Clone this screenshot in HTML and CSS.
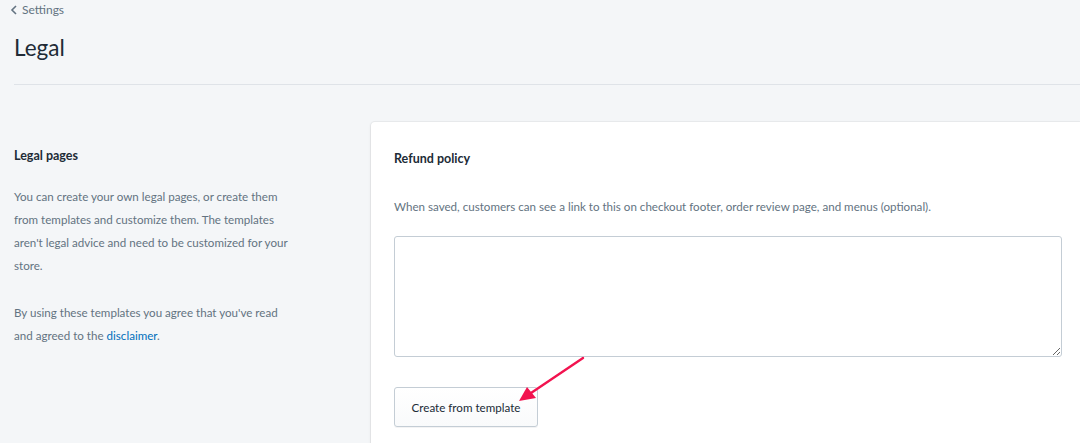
FILE: index.html
```html
<!DOCTYPE html>
<html>
<head>
<meta charset="utf-8">
<link rel="stylesheet" href="styles.css">
</head>
<body>
<div class="page">
  <header class="header">
    <a class="breadcrumb" href="#">
      <svg class="chev" width="8" height="10" viewBox="0 0 8 10"><path d="M6 1 L2 5 L6 9" fill="none" stroke="#637381" stroke-width="1.6"/></svg>
      <span>Settings</span>
    </a>
    <h1 class="title">Legal</h1>
  </header>
  <div class="divider"></div>
  <section class="layout">
    <div class="annotation">
      <h2 class="ann-title">Legal pages</h2>
      <p class="ann-text">You can create your own legal pages, or create them from templates and customize them. The templates aren't legal advice and need to be customized for your store.</p>
      <p class="ann-text second">By using these templates you agree that you've read and agreed to the <a href="#" class="link">disclaimer</a>.</p>
    </div>
    <div class="card">
      <h3 class="card-title">Refund policy</h3>
      <p class="card-help">When saved, customers can see a link to this on checkout footer, order review page, and menus (optional).</p>
      <textarea class="field"></textarea>
      <div class="actions">
        <button class="btn">Create from template</button>
        <svg class="arrow" width="80" height="60" viewBox="0 0 80 60">
          <line x1="74" y1="4" x2="22" y2="39" stroke="#f2134f" stroke-width="2.4" stroke-linecap="round"/>
          <polygon points="10,47 18,33 27,44" fill="#f2134f"/>
        </svg>
      </div>
    </div>
  </section>
</div>
</body>
</html>
```
FILE: styles.css
```css
* { box-sizing: border-box; }
html, body { margin: 0; padding: 0; }
body {
  background: #f4f6f8;
  font-family: "Lato", "Open Sans", sans-serif;
  color: #212b36;
  width: 1080px;
  height: 443px;
  overflow: hidden;
}
.page { padding: 0 0 0 14px; }
.header { padding-top: 2px; }
.breadcrumb {
  display: flex;
  align-items: center;
  gap: 4px;
  color: #637381;
  text-decoration: none;
  font-size: 12px;
  line-height: 16px;
  margin-left: -4px;
}
.chev { display: block; }
.title {
  margin: 16px 0 0;
  font-size: 22.5px;
  font-weight: 400;
  line-height: 28px;
  color: #212b36;
}
.divider {
  margin-top: 22px;
  height: 1px;
  background: #dfe3e8;
}
.layout {
  display: grid;
  grid-template-columns: 280px 1fr;
  column-gap: 77px;
  margin-top: 37px;
}
.annotation { padding-top: 26px; }
.ann-title {
  margin: 0;
  font-size: 12.5px;
  font-weight: 700;
  line-height: 16px;
  color: #212b36;
}
.ann-text {
  margin: 21px 0 0;
  font-size: 11.6px;
  line-height: 23px;
  color: #637381;
}
.ann-text.second { margin-top: 24px; }
.link { color: #006fbb; text-decoration: none; }
.card {
  background: #fff;
  border-radius: 4px 0 0 0;
  box-shadow: 0 0 0 1px rgba(63,63,68,0.05), 0 1px 3px 0 rgba(63,63,68,0.12);
  padding: 29px 18px 17px 23px;
  height: 340px;
}
.card-title {
  margin: 0;
  font-size: 12.5px;
  font-weight: 700;
  line-height: 16px;
  color: #212b36;
}
.card-help {
  margin: 32px 0 0;
  font-size: 11.6px;
  line-height: 16px;
  color: #637381;
}
.field {
  display: block;
  margin-top: 21px;
  width: 668px;
  height: 121px;
  border: 1px solid #c4cdd5;
  border-radius: 3px;
  resize: vertical;
  background: #fff;
}
.actions {
  position: relative;
  margin-top: 30px;
}
.btn {
  width: 144px;
  height: 40px;
  background: linear-gradient(#fff, #f9fafb);
  border: 1px solid #c4cdd5;
  border-radius: 3px;
  box-shadow: 0 1px 0 0 rgba(22,29,37,0.05);
  font-family: inherit;
  font-size: 11.6px;
  color: #212b36;
  padding: 0;
}
.arrow {
  position: absolute;
  left: 115px;
  top: -33px;
}
```
